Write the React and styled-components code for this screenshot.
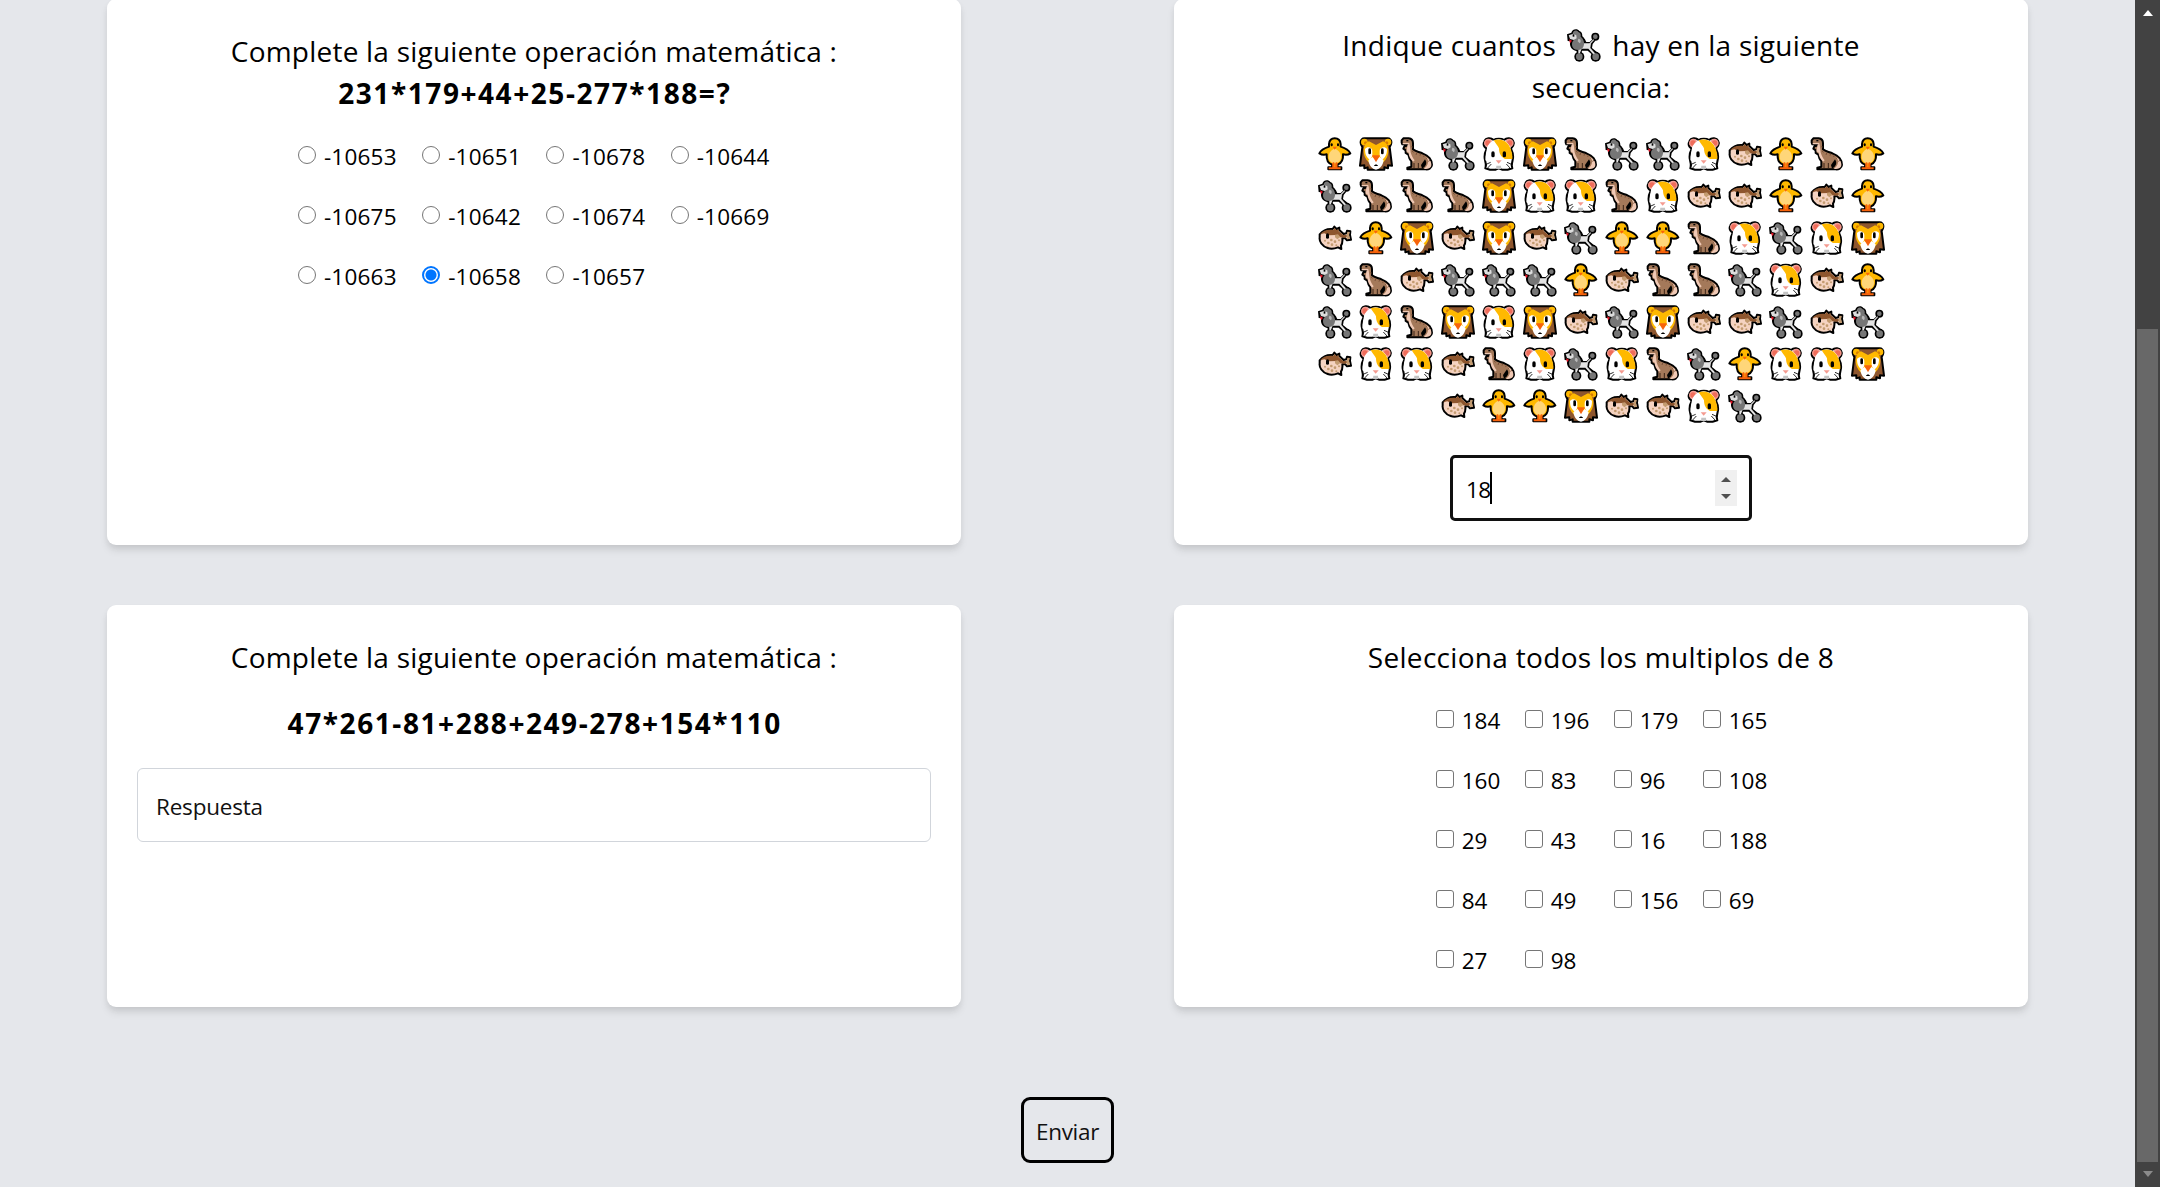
import React from "react";
import styled, { createGlobalStyle } from "styled-components";

const GlobalStyle = createGlobalStyle`
  *, *::before, *::after { box-sizing: border-box; }
  html, body { margin: 0; padding: 0; overflow: hidden; background: #e5e7eb; }
  body { font-family: "Open Sans", "Noto Sans", sans-serif; color: #000; }
`;

const Screen = styled.div`
  display: flex;
  width: 2160px;
  height: 1187px;
  overflow: hidden;
`;

const Main = styled.main`
  width: 2135px;
  display: flex;
  flex-direction: column;
  align-items: center;
  background: #e5e7eb;
`;

const Cards = styled.div`
  display: grid;
  grid-template-columns: 854px 854px;
  grid-template-rows: 546px 402px;
  column-gap: 213px;
  row-gap: 60px;
  margin-top: -1px;
`;

const Card = styled.section`
  display: flex;
  flex-direction: column;
  align-items: center;
  padding: ${(p) => p.$top || 31}px 30px 0;
  background: #fff;
  border-radius: 9px;
  box-shadow: 0 6px 9px -1.5px rgba(0, 0, 0, 0.1), 0 3px 6px -1.5px rgba(0, 0, 0, 0.06);
`;

const Title = styled.h2`
  margin: 0;
  font-size: 28px;
  line-height: 42px;
  font-weight: 400;
  letter-spacing: ${(p) => p.$track || 0.22}px;
  text-align: center;
  white-space: nowrap;
`;

const Expression = styled.p`
  margin: ${(p) => p.$gap || 0}px 0 0;
  font-size: 28px;
  line-height: 42px;
  font-weight: 700;
  letter-spacing: 1.57px;
  text-indent: 1.5px;
`;

const Options = styled.div`
  display: grid;
  grid-template-columns: repeat(4, ${(p) => p.$col}px);
  column-gap: ${(p) => p.$gap}px;
  row-gap: 24px;
  margin-top: 24px;
  letter-spacing: ${(p) => p.$track || 0}px;
`;

const Option = styled.label`
  display: flex;
  align-items: center;
  gap: 8px;
  height: 36px;
  font-size: 22.5px;
  line-height: 36px;
  white-space: nowrap;
`;

const OptionText = styled.span`
  padding-top: 1px;
`;

const Control = styled.input`
  appearance: none;
  flex: none;
  width: 18px;
  height: 18px;
  margin: 0 0 2px;
  background: #fff;
  border: 1.5px solid #767676;
  border-radius: ${(p) => (p.type === "radio" ? "50%" : "3px")};
  &:checked {
    border: 2px solid #0075ff;
    background: radial-gradient(circle, #0075ff 5px, #fff 6px);
  }
`;

const AnswerInput = styled.input`
  width: 794px;
  height: 74px;
  margin-top: 24px;
  padding: 3px 18px 0;
  border: 1.5px solid #d1d5db;
  border-radius: 6px;
  font: 400 22.5px "Open Sans", "Noto Sans", sans-serif;
  letter-spacing: -0.2px;
  outline: none;
  &::placeholder { color: #111; opacity: 1; }
`;

const Sequence = styled.div`
  display: flex;
  flex-direction: column;
  align-items: center;
  margin-top: 25px;
`;

const SequenceRow = styled.div`
  display: flex;
  height: 42px;
`;

const EmojiCell = styled.span`
  display: inline-flex;
  align-items: center;
  justify-content: center;
  width: 41px;
  height: 42px;
  vertical-align: top;
`;

const NumberField = styled.div`
  display: flex;
  align-items: center;
  width: 302px;
  height: 66px;
  margin-top: 28px;
  padding: 0 12px 0 13px;
  border: 3px solid #101010;
  border-radius: 5px;
  font-size: 22.5px;
  line-height: 36px;
`;

const NumberValue = styled.span`
  padding-top: 3px;
  letter-spacing: -0.5px;
`;

const Caret = styled.span`
  width: 2px;
  height: 32px;
  margin-left: -1px;
  background: #000;
`;

const Spinner = styled.span`
  display: flex;
  flex-direction: column;
  align-items: center;
  justify-content: space-between;
  width: 22px;
  height: 36px;
  margin-left: auto;
  padding: 7px 0;
  background: #f0f0f0;
`;

const Arrow = styled.i`
  width: 0;
  height: 0;
  border: solid transparent;
  border-width: 0 5.5px;
  ${(p) => (p.$down ? "border-top" : "border-bottom")}: ${(p) => p.$h || 6}px solid ${(p) => p.$color};
`;

const SubmitButton = styled.button`
  width: 93px;
  height: 66px;
  margin-top: 90px;
  padding: 3px 0 0;
  border: 3px solid #000;
  border-radius: 9px;
  background: transparent;
  color: #111;
  font: 400 22.5px "Open Sans", "Noto Sans", sans-serif;
  letter-spacing: -0.3px;
`;

const Scrollbar = styled.aside`
  display: flex;
  flex-direction: column;
  align-items: center;
  justify-content: space-between;
  width: 25px;
  padding: 10px 0;
  background: #424242;
`;

const Thumb = styled.div`
  width: 21px;
  height: 833px;
  margin-top: 304px;
  background: #686868;
`;

function Chick() {
  return (
    <>
      <path d="M50 4C40 4 34 11 33 21V29C24 32 10 37 4 49C12 54 19 54 26 52C25 66 28 78 42 83V91H31V97H70V91H59V83C72 78 76 66 75 52C82 54 90 54 97 49C91 37 77 32 68 29V21C67 11 60 4 50 4Z" fill="#ffb900" stroke="#000" strokeWidth="6" strokeLinejoin="round" />
      <path d="M43 74H49V90H52V74H58V91H68V97H32V91H43Z" fill="#f7630c" />
      <path d="M50 35C38 39 32 49 32 59C32 71 40 79 50 79C61 79 69 71 69 59C69 49 62 39 50 35Z" fill="#ffd679" />
      <path d="M44 76H49V90H44ZM53 76H58V90H53Z" fill="#f7630c" />
      <path d="M44 29H57L50 38Z" fill="#f7630c" />
      <rect x="38" y="19" width="6" height="9" rx="3" />
      <rect x="57" y="19" width="6" height="9" rx="3" />
    </>
  );
}

function Lion() {
  return (
    <>
      <path d="M18 4H84C92 3 98 9 97 17C97 23 93 27 92 30L99 86L87 85V94L76 91V98H26V91L16 94V85L3 86L10 30C9 27 5 23 5 17C4 9 10 3 18 4Z" fill="#8e562e" stroke="#000" strokeWidth="6" strokeLinejoin="round" />
      <circle cx="16" cy="15" r="10" fill="#ffb900" />
      <circle cx="87" cy="15" r="10" fill="#ffb900" />
      <circle cx="20" cy="18" r="5" fill="#d67d00" />
      <circle cx="83" cy="18" r="5" fill="#d67d00" />
      <path d="M30 13L51 24L72 13C82 17 88 27 88 42C88 58 79 72 68 80H34C23 72 14 58 14 42C14 27 20 17 30 13Z" fill="#ffb900" />
      <path d="M18 36C25 27 40 31 40 42V56L33 68C24 62 18 54 18 36ZM84 36C77 27 62 31 62 42V56L69 68C78 62 84 54 84 36Z" fill="#fff" />
      <path d="M40 60L28 70C31 87 39 96 51 98C63 96 71 87 74 70L62 60L51 70Z" fill="#fff" />
      <path d="M39 55H63L51 76Z" fill="#f7630c" />
      <path d="M45 87C47 81 55 81 57 87Z" />
      <rect x="28" y="34" width="8" height="18" rx="4" />
      <rect x="66" y="34" width="8" height="18" rx="4" />
    </>
  );
}

function Dino() {
  return (
    <>
      <path d="M10 4L26 4C34 5 39 10 39 18L39 37C48 45 58 44 69 50C85 55 97 70 96 84C95 94 85 98 77 97H22V92L34 89V73C29 67 26 59 25 53L17 48L17 40L10 35L13 28L20 26L21 22H7L5 17V10Z" fill="#a4795a" stroke="#000" strokeWidth="6" strokeLinejoin="round" />
      <path d="M23 23L29 22L31 38C31 50 38 62 44 70L39 74C30 64 26 56 26 47L19 43ZM8 18H28V22H8Z" fill="#f0c9b5" />
      <path d="M78 60C88 68 87 85 71 96H78C90 95 95 90 94 81C93 72 87 65 78 60Z" fill="#f0c9b5" />
      <path d="M75 67C83 78 77 90 66 95L63 84Z" />
      <path d="M42 78V93M55 78V93" stroke="#3a2416" strokeWidth="3" fill="none" />
      <path d="M34 29L38 30M36 42L41 46M50 48L48 54M62 50L60 56M73 54L71 60M83 61L79 65M90 70L85 73" stroke="#7a5138" strokeWidth="3" />
      <path d="M19 9H25V13H19Z" />
    </>
  );
}

function Poodle() {
  return (
    <>
      <g fill="#000">
        <circle cx="85" cy="26" r="12" />
        <circle cx="37" cy="86" r="15" />
        <circle cx="86" cy="86" r="15" />
        <path d="M13 14C16 2 32 1 37 9C46 12 46 21 46 25C56 34 57 42 58 42H68L78 32L85 38L77 48L75 60L94 76L80 84L62 68H45L42 80H29V70C13 66 6 53 10 40L2 39L0 19Z" />
      </g>
      <path d="M46 46H72L70 60L86 78L80 80L64 62H44L38 77H34V60Z" fill="#e3e3e3" />
      <path d="M68 48L80 35" stroke="#d0d0d0" strokeWidth="4" />
      <path d="M17 17C19 6 29 5 34 12C41 14 42 20 41 26C56 37 55 62 36 66C20 67 12 56 16 42L24 31Z" fill="#767676" />
      <path d="M5 22L19 17L28 22L29 31L20 36L9 33Z" fill="#ddd" />
      <path d="M34 32C42 32 43 41 38 46L32 40Z" fill="#b8b8b8" />
      <circle cx="85" cy="26" r="7" fill="#767676" />
      <circle cx="37" cy="86" r="10" fill="#767676" />
      <circle cx="86" cy="86" r="10" fill="#767676" />
      <path d="M6 34L15 38L9 46Z" fill="#e81224" />
      <path d="M17 19H22V26H17Z" />
    </>
  );
}

function Hamster() {
  return (
    <>
      <path d="M35 9C42 4 59 4 66 9C75 1 89 2 94 13C99 23 91 31 87 35C92 45 95 58 92 69L89 84L91 94L77 98H60L50 94L41 98H24L10 94L12 84L9 69C6 58 9 45 14 35C8 31 2 23 7 13C12 2 26 1 35 9Z" fill="#fff" stroke="#000" strokeWidth="6" strokeLinejoin="round" />
      <circle cx="19" cy="18" r="13" fill="#f49b90" />
      <circle cx="82" cy="18" r="13" fill="#f49b90" />
      <circle cx="18" cy="18" r="8" fill="#ef6d5b" />
      <circle cx="83" cy="18" r="8" fill="#ef6d5b" />
      <path d="M14 38C17 18 34 7 50 7C66 7 84 18 86 38L84 78C68 80 56 74 50 70L32 80L10 70Z" fill="#fff" />
      <path d="M35 10C59 2 79 14 86 36C90 46 92 57 91 66H69C56 60 51 48 51 34C47 26 41 20 35 10Z" fill="#ffb900" />
      <rect x="28" y="43" width="10" height="18" rx="5" />
      <rect x="62" y="43" width="10" height="18" rx="5" />
      <path d="M41 70H59L50 80Z" fill="#f49b90" />
      <path d="M43 86H57L58 96H42Z" fill="#c4c4c4" />
      <path d="M26 76L8 84M28 81L16 94M75 76L93 84M73 81L85 94" stroke="#000" strokeWidth="2.5" />
    </>
  );
}

function Fish() {
  return (
    <>
      <path d="M5 40C14 29 27 22 44 24L49 17L56 24L64 20V27L77 39L85 37L87 29L97 31L96 42L99 56L87 58L82 52L73 52C74 61 73 68 69 74L70 84L60 79C50 83 40 85 29 81C12 76 3 61 5 49Z" fill="#f5d3c1" stroke="#000" strokeWidth="6" strokeLinejoin="round" />
      <path d="M6 40C16 29 27 25 46 27L50 21L55 27L62 25V31L76 42H86L90 46L82 50L67 49L56 42L33 43L19 37Z" fill="#8e562e" />
      <path d="M89 32L95 33L93 42L96 53L88 55L85 45ZM51 41L60 40L67 48L58 55L51 49Z" fill="#c39b70" />
      <rect x="24" y="37" width="9" height="16" rx="4.5" />
      <g fill="#c39b70">
        <circle cx="40" cy="57" r="4" />
        <circle cx="51" cy="62" r="4" />
        <circle cx="31" cy="66" r="4" />
        <circle cx="42" cy="71" r="4" />
        <circle cx="55" cy="73" r="3" />
        <circle cx="21" cy="59" r="3" />
        <circle cx="29" cy="76" r="2" />
        <circle cx="63" cy="58" r="3" />
      </g>
    </>
  );
}

const ANIMALS = { C: Chick, L: Lion, D: Dino, P: Poodle, H: Hamster, F: Fish };

function Emoji({ kind }) {
  const Animal = ANIMALS[kind];
  return (
    <EmojiCell>
      <svg width="34" height="34" viewBox="0 0 102 102">
        <Animal />
      </svg>
    </EmojiCell>
  );
}

const SEQUENCE = [
  "CLDPHLDPPHFCDC",
  "PDDDLHHDHFFCFC",
  "FCLFLFPCCDHPHL",
  "PDFPPPCFDDPHFC",
  "PHDLHLFPLFFPFP",
  "FHHFDHPHDPCHHL",
  "FCCLFFHP",
];

const RESULTS = [-10653, -10651, -10678, -10644, -10675, -10642, -10674, -10669, -10663, -10658, -10657];
const NUMBERS = [184, 196, 179, 165, 160, 83, 96, 108, 29, 43, 16, 188, 84, 49, 156, 69, 27, 98];

export default function App() {
  return (
    <Screen>
      <GlobalStyle />
      <Main>
        <Cards>
          <Card>
            <Title>Complete la siguiente operación matemática :</Title>
            <Expression>231*179+44+25-277*188=?</Expression>
            <Options $col={99.5} $gap={24.75} $track={0.22}>
              {RESULTS.map((n) => (
                <Option key={n}>
                  <Control type="radio" name="result" defaultChecked={n === -10658} />
                  <OptionText>{n}</OptionText>
                </Option>
              ))}
            </Options>
          </Card>
          <Card $top={25}>
            <Title $track={0.26}>
              Indique cuantos <Emoji kind="P" /> hay en la siguiente
              <br />
              secuencia:
            </Title>
            <Sequence>
              {SEQUENCE.map((row) => (
                <SequenceRow key={row}>
                  {[...row].map((kind, i) => (
                    <Emoji key={i} kind={kind} />
                  ))}
                </SequenceRow>
              ))}
            </Sequence>
            <NumberField>
              <NumberValue>18</NumberValue>
              <Caret />
              <Spinner>
                <Arrow $color="#505050" $h={5} />
                <Arrow $color="#505050" $h={5} $down />
              </Spinner>
            </NumberField>
          </Card>
          <Card>
            <Title>Complete la siguiente operación matemática :</Title>
            <Expression $gap={24}>47*261-81+288+249-278+154*110</Expression>
            <AnswerInput placeholder="Respuesta" />
          </Card>
          <Card>
            <Title $track={0.31}>Selecciona todos los multiplos de 8</Title>
            <Options $col={63.5} $gap={25.5}>
              {NUMBERS.map((n) => (
                <Option key={n}>
                  <Control type="checkbox" />
                  <OptionText>{n}</OptionText>
                </Option>
              ))}
            </Options>
          </Card>
        </Cards>
        <SubmitButton>Enviar</SubmitButton>
      </Main>
      <Scrollbar>
        <Arrow $color="#fff" />
        <Thumb />
        <Arrow $color="#8b8b8b" $down />
      </Scrollbar>
    </Screen>
  );
}
